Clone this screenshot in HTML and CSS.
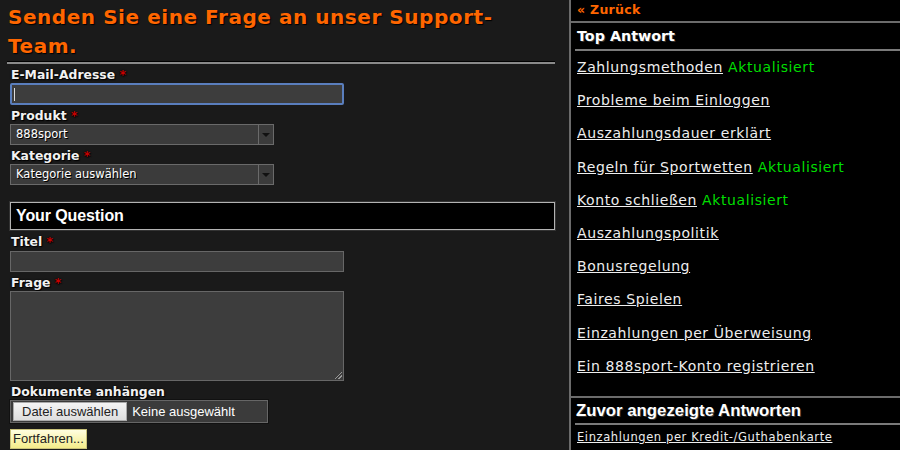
FILE: index.html
```html
<!DOCTYPE html>
<html lang="de">
<head>
    <meta charset="UTF-8">
    <title>Support kontaktieren</title>
    <link rel="stylesheet" href="styles.css">
</head>
<body>
    <div id="page">
        <!-- left side: the contact form -->
        <div id="main">
            <h1>Senden Sie eine Frage an unser Support-Team.</h1>
            <hr class="rule">
            <form id="ask-form">
                <label class="field-label">E-Mail-Adresse <span class="req">*</span></label>
                <div class="text-input focused"><span class="caret"></span></div>

                <label class="field-label">Produkt <span class="req">*</span></label>
                <div class="select-box">
                    <span class="select-value">888sport</span>
                    <span class="select-arrow"></span>
                </div>

                <label class="field-label">Kategorie <span class="req">*</span></label>
                <div class="select-box">
                    <span class="select-value">Kategorie auswählen</span>
                    <span class="select-arrow"></span>
                </div>

                <h2 class="section-title">Your Question</h2>

                <label class="field-label">Titel <span class="req">*</span></label>
                <div class="text-input title-input"></div>

                <label class="field-label">Frage <span class="req">*</span></label>
                <div class="text-area"><span class="grip"></span></div>

                <label class="field-label">Dokumente anhängen</label>
                <div class="file-box">
                    <span class="file-btn">Datei auswählen</span>
                    <span class="file-name">Keine ausgewählt</span>
                </div>

                <span id="submit-btn">Fortfahren...</span>
            </form>
        </div>
        <!-- right side: answers -->
        <div id="sidebar">
            <div id="back-link">« Zurück</div>
            <h3 class="side-title">Top Antwort</h3>
            <ul class="answers">
                <li><a href="#">Zahlungsmethoden</a> <span class="updated">Aktualisiert</span></li>
                <li><a href="#">Probleme beim Einloggen</a></li>
                <li><a href="#">Auszahlungsdauer erklärt</a></li>
                <li><a href="#">Regeln für Sportwetten</a> <span class="updated">Aktualisiert</span></li>
                <li><a href="#">Konto schließen</a> <span class="updated">Aktualisiert</span></li>
                <li><a href="#">Auszahlungspolitik</a></li>
                <li><a href="#">Bonusregelung</a></li>
                <li><a href="#">Faires Spielen</a></li>
                <li><a href="#">Einzahlungen per Überweisung</a></li>
                <li><a href="#">Ein 888sport-Konto registrieren</a></li>
            </ul>
            <div id="recent">
                <h3 class="side-title recent-title">Zuvor angezeigte Antworten</h3>
                <a class="recent-link" href="#">Einzahlungen per Kredit-/Guthabenkarte</a>
            </div>
        </div>
    </div>
</body>
</html>
```

FILE: styles.css
```css
/* page frame */
    * {
        box-sizing: border-box;
    }
    body {
        margin: 0;
        background-color: #1a1a1a;
        font-family: "DejaVu Sans", Verdana, sans-serif;
        color: #eee;
    }
    #page {
        display: flex;
        width: 900px;
        height: 450px;
        overflow: hidden;
    }
    #main {
        width: 569px;
        padding: 0 14px 0 7px;
    }
    h1 {
        margin: 0;
        max-width: 510px;
        padding: 3px 0 0 1px;
        color: #ff6600;
        font-size: 20px;
        letter-spacing: 0.55px;
        line-height: 29px;
        font-weight: bold;
        text-shadow: 1px 1px 1px #000;
    }
    .rule {
        margin: 0;
        height: 3px;
        border: none;
        border-top: 1px solid #000;
        background-color: #8a8a8a;
    }

/* form fields */
    #ask-form {
        display: flex;
        flex-direction: column;
        align-items: flex-start;
        padding-left: 3px;
    }
    .field-label {
        display: block;
        font-size: 12.4px;
        font-weight: bold;
        color: #f2f2f2;
        text-shadow: 1px 1px 1px #000, 0 0 2px #000;
        line-height: 14px;
        height: 14px;
        margin-top: 4px;
        margin-left: 1px;
    }
    .req {
        color: #c80000;
    }
    .text-input {
        width: 334px;
        height: 21px;
        background-color: #3d3d3d;
        border: 1px solid #676767;
        margin-top: 1px;
        position: relative;
    }
    .text-input.focused {
        border: 2px solid #5a7ebd;
        border-radius: 2px;
        height: 22px;
    }
    .title-input {
        margin-top: 2px;
    }
    .caret {
        position: absolute;
        left: 2px;
        top: 3px;
        width: 1px;
        height: 13px;
        background-color: #ddd;
    }
    .select-box {
        display: flex;
        width: 264px;
        height: 21px;
        background-color: #3b3b3b;
        border: 1px solid #6a6a6a;
        margin-top: 1px;
        font-size: 11.5px;
        color: #fff;
        text-shadow: 1px 1px 0 #000;
    }
    .select-value {
        flex: 1;
        padding: 2px 0 0 5px;
    }
    .select-arrow {
        width: 15px;
        border-left: 1px solid #6a6a6a;
        position: relative;
    }
    .select-arrow::after {
        content: "";
        position: absolute;
        left: 3px;
        top: 8px;
        border-left: 4px solid transparent;
        border-right: 4px solid transparent;
        border-top: 4px solid #111;
    }
    .section-title {
        width: 545px;
        height: 28px;
        margin: 17px 0 1px 0;
        background-color: #000;
        border: 1px solid #b3b3b3;
        box-shadow: 0 0 0 1px #333;
        font-family: "Liberation Sans", Arial, sans-serif;
        font-size: 16px;
        font-weight: bold;
        line-height: 26px;
        padding-left: 5px;
        color: #fff;
        letter-spacing: -0.1px;
    }
    .text-area {
        width: 334px;
        height: 90px;
        background-color: #3d3d3d;
        border: 1px solid #676767;
        margin-top: 1px;
        position: relative;
    }
    .grip {
        position: absolute;
        right: 1px;
        bottom: 1px;
        width: 7px;
        height: 7px;
        background: linear-gradient(135deg, transparent 45%, #999 45%, #999 55%, transparent 55%, transparent 70%, #999 70%, #999 80%, transparent 80%);
    }
    .file-box {
        display: flex;
        align-items: center;
        width: 258px;
        height: 23px;
        margin-top: 1px;
        background-color: #3b3b3b;
        border: 1px solid #666;
        box-shadow: 0 0 0 1px #111;
        padding: 0 2px;
        font-family: "Liberation Sans", Arial, sans-serif;
        font-size: 13px;
    }
    .file-btn {
        background: linear-gradient(#f4f4f4, #dedede);
        color: #222;
        border: 1px solid #aaa;
        height: 19px;
        line-height: 17px;
        padding: 0 8px 0 8px;
    }
    .file-name {
        color: #fff;
        padding-left: 5px;
    }
    #submit-btn {
        margin-top: 6px;
        height: 20px;
        padding: 0 2px;
        background: linear-gradient(#fffde0, #f4ec8a);
        border: 1px solid #c9c27a;
        color: #222;
        font-family: "Liberation Sans", Arial, sans-serif;
        font-size: 13px;
        line-height: 18px;
        cursor: pointer;
    }

/* sidebar */
    #sidebar {
        flex: 1;
        background-color: #000;
        border-left: 2px solid #6b6b6b;
        display: flex;
        flex-direction: column;
    }
    #back-link {
        color: #ff6600;
        font-size: 12.5px;
        letter-spacing: 0.3px;
        font-weight: bold;
        height: 23px;
        line-height: 20px;
        padding-left: 6px;
        border-bottom: 2px solid #6b6b6b;
    }
    .side-title {
        margin: 0 0 0 4px;
        font-size: 14.3px;
        font-weight: bold;
        color: #fff;
        height: 28px;
        line-height: 26px;
        padding-left: 2px;
        border-bottom: 2px solid #7a7a7a;
        text-shadow: 1px 1px 0 #333;
    }
    .answers {
        list-style: none;
        margin: 0;
        padding: 8px 0 0 6px;
        height: 347px;
        border-bottom: 2px solid #6b6b6b;
    }
    .answers li {
        font-size: 14px;
        letter-spacing: 0.6px;
        line-height: 16px;
        height: 33.2px;
    }
    .answers a {
        color: #eee;
        text-decoration: underline;
    }
    .updated {
        color: #00dd00;
    }
    .recent-title {
        font-family: "Liberation Sans", Arial, sans-serif;
        font-size: 16.8px;
        height: 27px;
        line-height: 26px;
        padding-left: 1px;
    }
    .recent-link {
        display: block;
        margin: 5px 0 0 6px;
        font-size: 11.5px;
        letter-spacing: 0.6px;
        color: #eee;
        text-decoration: underline;
    }
```
